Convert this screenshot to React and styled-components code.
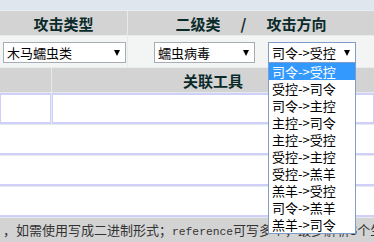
import React from 'react'
import styled, { createGlobalStyle } from 'styled-components'

const GlobalStyle = createGlobalStyle`
  html, body { margin: 0; padding: 0; }
  body {
    background: #dfe6ed;
    font-family: "Noto Sans CJK SC", "Liberation Sans", sans-serif;
    width: 374px;
    height: 242px;
    overflow: hidden;
  }
`

const Page = styled.div`
  padding-top: 10px;
  display: flex;
  flex-direction: column;
`

const Band = styled.div`
  display: grid;
  grid-template-columns: ${p => p.cols};
  column-gap: 1px;
  background: #e4ebec;
  border-top: 1px solid #e8eeee;
`

const HeadCell = styled.div`
  height: 24px;
  background: #d3d3d3;
  display: flex;
  align-items: center;
  justify-content: center;
  font-size: 15px;
  font-weight: bold;
  color: #0b2a2a;
  white-space: nowrap;
  overflow: hidden;
  line-height: 1;
`

const Slash = styled.span`
  margin: 0 20px;
`

const FieldCell = styled.div`
  height: 31px;
  background: #f3f4f4;
  display: flex;
  align-items: center;
  gap: 13px;
  padding-left: ${p => p.pad || 3}px;
  padding-top: 1px;
  box-sizing: border-box;
`

const SelectWrap = styled.div`
  position: relative;
`

const Select = styled.div`
  width: ${p => p.w}px;
  height: 21px;
  box-sizing: border-box;
  background: #fff;
  border: 1px solid ${p => (p.focus ? '#7f9dc9' : '#a7adb2')};
  display: flex;
  align-items: center;
  justify-content: space-between;
  padding: 0 5px 0 3px;
  font-size: 13px;
  color: #000;
  line-height: 1;
  white-space: nowrap;
`

const Arrow = styled.span`
  width: 0;
  height: 0;
  border-left: 3.5px solid transparent;
  border-right: 3.5px solid transparent;
  border-top: 6px solid #000;
  margin-top: 1px;
`

const Dropdown = styled.ul`
  position: absolute;
  left: 0;
  top: 20px;
  width: 88px;
  box-sizing: border-box;
  margin: 0;
  padding: 0;
  list-style: none;
  background: #fff;
  border: 1px solid #7f9dc9;
  z-index: 5;
`

const Option = styled.li`
  height: 17px;
  display: flex;
  align-items: center;
  padding-left: 3px;
  font-size: 13px;
  line-height: 1;
  white-space: nowrap;
  overflow: hidden;
  background: ${p => (p.active ? '#3399ff' : '#fff')};
  color: ${p => (p.active ? '#fff' : '#000')};
`

const DataRow = styled.div`
  display: grid;
  grid-template-columns: ${p => p.cols || '1fr'};
  column-gap: 1px;
  background: #e4ebec;
  padding-top: ${p => (p.first ? 1 : 0)}px;
  padding-bottom: 1px;
`

const DataCell = styled.div`
  height: ${p => p.h}px;
  box-sizing: border-box;
  background: #fff;
  border-bottom: 2px solid #cfcff9;
  border-top: ${p => (p.top ? '2px solid #cfcff9' : 'none')};
  border-left: ${p => (p.side ? '1px solid #cfcff9' : 'none')};
  border-right: ${p => (p.side ? '1px solid #cfcff9' : 'none')};
`

const Note = styled.div`
  height: 24px;
  line-height: 24px;
  background: #d3d3d3;
  color: #333;
  font-size: 13px;
  padding-left: 3px;
  white-space: nowrap;
  overflow: hidden;
`

const Mono = styled.span`
  font-family: "Liberation Mono", monospace;
  font-size: 11.3px;
  vertical-align: baseline;
`

const options = [
  '司令->受控',
  '受控->司令',
  '司令->主控',
  '主控->司令',
  '主控->受控',
  '受控->主控',
  '受控->羔羊',
  '羔羊->受控',
  '司令->羔羊',
  '羔羊->司令',
]

export default function App() {
  return (
    <>
      <GlobalStyle />
      <Page>
        <Band cols="127px 1fr">
          <HeadCell>攻击类型</HeadCell>
          <HeadCell>
            二级类<Slash>/</Slash>攻击方向
          </HeadCell>
        </Band>
        <Band cols="127px 1fr">
          <FieldCell>
            <Select w={123}>
              木马蠕虫类<Arrow />
            </Select>
          </FieldCell>
          <FieldCell pad={26}>
            <Select w={101}>
              蠕虫病毒<Arrow />
            </Select>
            <SelectWrap>
              <Select w={88} focus>
                司令-&gt;受控<Arrow />
              </Select>
              <Dropdown>
                {options.map((o, i) => (
                  <Option key={i} active={i === 0}>{o}</Option>
                ))}
              </Dropdown>
            </SelectWrap>
          </FieldCell>
        </Band>
        <Band cols="51px 1fr">
          <HeadCell />
          <HeadCell>关联工具</HeadCell>
        </Band>
        <DataRow cols="51px 1fr" first>
          <DataCell h={31} top side />
          <DataCell h={31} top side />
        </DataRow>
        <DataRow>
          <DataCell h={30} />
        </DataRow>
        <DataRow>
          <DataCell h={30} />
        </DataRow>
        <DataRow>
          <DataCell h={30} />
        </DataRow>
        <Note>
          ，如需使用写成二进制形式；<Mono>reference</Mono>可写多个，最多解析3个生成
        </Note>
      </Page>
    </>
  )
}
